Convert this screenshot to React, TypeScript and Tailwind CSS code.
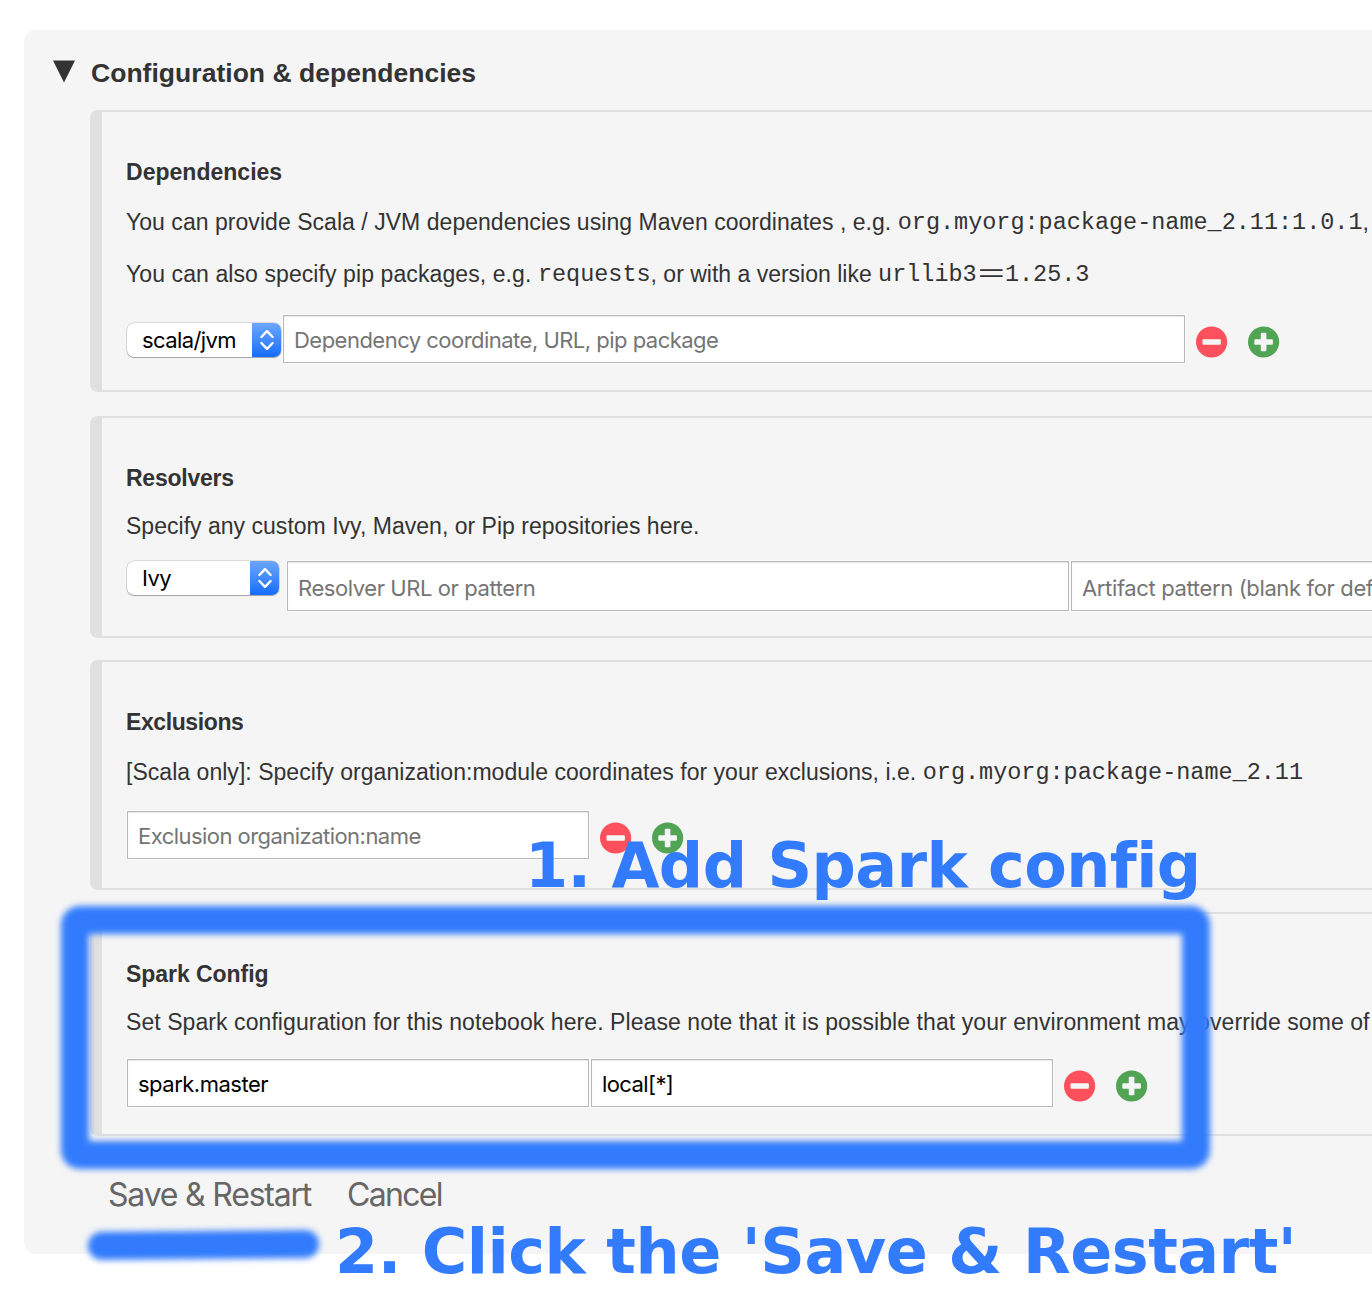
import type { ReactNode } from "react";

function Mono({ children }: { children: ReactNode }) {
  return (
    <code className="relative -top-px font-['Liberation_Mono',monospace] text-[23.47px] leading-[0] tracking-normal">{children}</code>
  );
}

function Card({ title, titleClass, className, children }: { title: string; titleClass: string; className: string; children: ReactNode }) {
  return (
    <section className={`rounded-l-[8px] border-y-2 border-l-[12px] border-[#e0e0e0] pt-[46px] pl-6 ${className}`}>
      <h3 className={`h-7 text-[23px] leading-7 font-bold ${titleClass}`}>{title}</h3>
      {children}
    </section>
  );
}

function Select({ label, className }: { label: string; className: string }) {
  return (
    <div className={`flex h-[34px] shrink-0 overflow-hidden rounded-[7px] bg-white font-['Inter',sans-serif] text-[22px] text-black shadow-[0_0_0_0.5px_rgba(0,0,0,0.22),0_1px_1px_rgba(0,0,0,0.25)] ${className}`}>
      <span className="flex-1 pl-[15px] leading-[34px] tracking-[-0.6px]">{label}</span>
      <span className="flex w-[29px] items-center justify-center bg-linear-to-b from-[#6ba6f8] to-[#136bff]">
        <svg width="16" height="22" viewBox="0 0 16 22" fill="none" stroke="white" strokeWidth="2.4" strokeLinecap="round" strokeLinejoin="round">
          <path d="M2.4 8 8 2.2 13.6 8M2.4 14 8 19.8 13.6 14" />
        </svg>
      </span>
    </div>
  );
}

function Field({ value, filled, className }: { value: string; filled?: boolean; className: string }) {
  return (
    <div
      className={`shrink-0 overflow-hidden border border-[#b9b9b9] bg-white pl-[10px] font-['Inter',sans-serif] text-[22px] whitespace-nowrap shadow-[0_0_0_1px_#fbfbfb,inset_0_1px_1px_#e6e6e6] ${filled ? "text-black" : "text-[#757575]"} ${className}`}
    >
      {value}
    </div>
  );
}

function AddRemove() {
  return (
    <div className="ml-[11px] flex gap-5 pt-[11px]">
      <svg width="32" height="32" viewBox="0 0 32 32">
        <circle cx="15.6" cy="16" r="15.6" fill="#fc515d" />
        <rect x="6.5" y="13.2" width="18.4" height="5.6" rx="1" fill="#f5f5f5" />
      </svg>
      <svg width="32" height="32" viewBox="0 0 32 32">
        <circle cx="15.6" cy="16" r="15.6" fill="#52a455" />
        <path d="M12.8 7.8q0-1 1-1h3.6q1 0 1 1v5.4h5.5q1 0 1 1v3.6q0 1-1 1h-5.5v5.4q0 1-1 1h-3.6q-1 0-1-1v-5.4H7.3q-1 0-1-1v-3.6q0-1 1-1h5.5z" fill="#f5f5f5" />
      </svg>
    </div>
  );
}

export default function App() {
  return (
    <div className="relative h-[1314px] w-full overflow-hidden bg-white pt-[30px] pl-6 font-['Liberation_Sans',sans-serif] text-[23px] text-[#333]">
      <main className="h-[1224px] rounded-l-[12px] bg-[#f5f5f5] pt-[27px]">
        <div className="flex h-8 pl-[29px]">
          <svg className="mt-[3px]" width="22" height="23" viewBox="0 0 22 23">
            <path d="M0 0.4h22L11 22.4z" fill="#333" />
          </svg>
          <h2 className="ml-4 text-[26.5px] leading-8 font-bold tracking-[0.03px]">Configuration &amp; dependencies</h2>
        </div>

        <div className="mt-[21px] ml-[66px] whitespace-nowrap">
          <Card title="Dependencies" titleClass="tracking-[0.02px]" className="h-[282px]">
            <p className="mt-[22px] h-7 leading-7 tracking-[0.04px]">
              You can provide Scala / JVM dependencies using Maven coordinates , e.g. <Mono>org.myorg:package-name_2.11:1.0.1</Mono>,
            </p>
            <p className="mt-6 h-7 leading-7">
              <span className="tracking-[0.09px]">You can also specify pip packages, e.g. </span>
              <Mono>requests</Mono>, or with a version like{" "}
              <Mono>
                urllib3<span className="mr-[4px] ml-[2px] tracking-[-3px]">==</span>1.25.3
              </Mono>
            </p>
            <div className="mt-[27px] flex">
              <Select label="scala/jvm" className="mt-2 ml-px w-[154px]" />
              <Field value="Dependency coordinate, URL, pip package" className="ml-[2px] h-12 w-[902px] leading-12 tracking-[-0.52px]" />
              <AddRemove />
            </div>
          </Card>

          <Card title="Resolvers" titleClass="tracking-[-0.25px]" className="mt-6 h-[222px]">
            <p className="mt-5 h-7 leading-7 tracking-[0.02px]">Specify any custom Ivy, Maven, or Pip repositories here.</p>
            <div className="mt-[21px] flex">
              <Select label="Ivy" className="ml-px w-[152px]" />
              <Field value="Resolver URL or pattern" className="ml-2 h-[50px] w-[782px] leading-[52px] tracking-[-0.42px]" />
              <Field value="Artifact pattern (blank for default)" className="ml-[2px] h-[50px] w-[782px] leading-[52px] tracking-[-0.36px]" />
            </div>
          </Card>

          <Card title="Exclusions" titleClass="tracking-[-0.4px]" className="mt-[22px] h-[230px]">
            <p className="mt-[22px] h-7 leading-7 tracking-[0.035px]">
              [Scala only]: Specify organization:module coordinates for your exclusions, i.e. <Mono>org.myorg:package-name_2.11</Mono>
            </p>
            <div className="mt-[25px] flex">
              <Field value="Exclusion organization:name" className="ml-px h-12 w-[462px] leading-12 tracking-[-0.54px]" />
              <AddRemove />
            </div>
          </Card>

          <Card title="Spark Config" titleClass="tracking-[-0.05px]" className="mt-[22px] h-[224px]">
            <p className="mt-5 h-7 leading-7 tracking-[0.07px]">
              Set Spark configuration for this notebook here. Please note that it is possible that your environment may override some of
            </p>
            <div className="mt-[23px] flex">
              <Field filled value="spark.master" className="ml-px h-12 w-[462px] leading-12 tracking-[-0.5px]" />
              <Field filled value="local[*]" className="ml-[2px] h-12 w-[462px] leading-12 tracking-[-0.6px]" />
              <AddRemove />
            </div>
          </Card>
        </div>

        <div className="mt-[39px] ml-[84px] flex font-['Inter',sans-serif] text-[32px] leading-10 whitespace-nowrap text-[#666]">
          <button className="w-[239px] text-left tracking-[-1.2px]">Save &amp; Restart</button>
          <button className="tracking-[-1.7px]">Cancel</button>
        </div>
      </main>

      {/* Annotations drawn over the page */}
      <div className="absolute top-[906px] left-[61px] h-[263px] w-[1149px] rounded-[19px] border-[28px] border-[#317bfc] blur-[3px]" />
      <div className="absolute top-[1231px] left-[88px] h-[28px] w-[231px] rotate-[-0.5deg] rounded-full bg-[#317bfc] blur-[3px]" />
      <p className="absolute top-[830px] left-[525px] font-['DejaVu_Sans',sans-serif] text-[62px] leading-[72px] font-bold tracking-[-0.6px] whitespace-nowrap text-[#317bfc] [font-variant-ligatures:none]">
        1. Add Spark config
      </p>
      <p className="absolute top-[1216px] left-[335px] font-['DejaVu_Sans',sans-serif] text-[62px] leading-[72px] font-bold tracking-[-0.5px] whitespace-nowrap text-[#317bfc]">
        2. Click the 'Save &amp; Restart'
      </p>
    </div>
  );
}
